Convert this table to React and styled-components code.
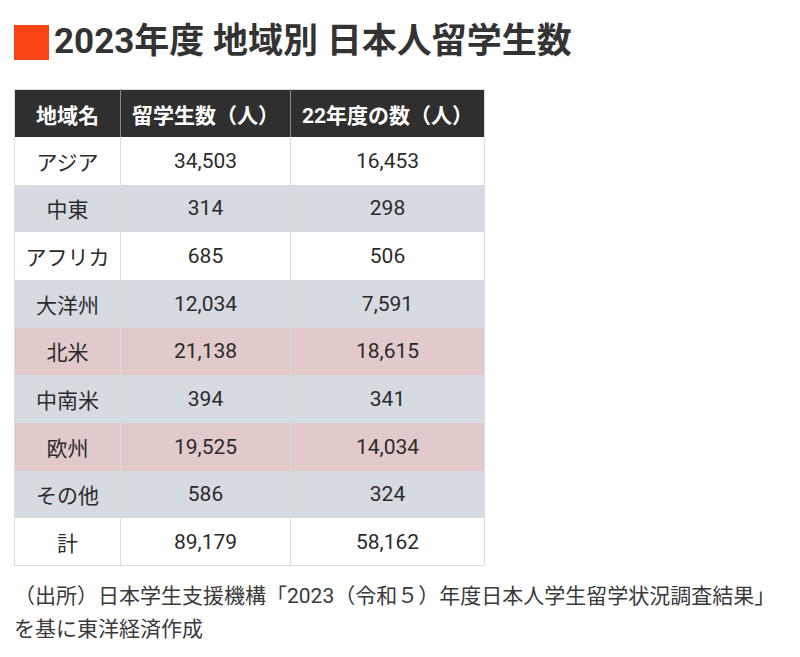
import React from "react";
import styled, { createGlobalStyle } from "styled-components";

const GlobalStyle = createGlobalStyle`
  body {
    margin: 0;
    background: #fff;
    font-family: Roboto, "Noto Sans CJK JP", sans-serif;
    color: #333;
  }
`;

const Page = styled.div`
  padding: 22px 14px 0 14px;
`;

const Title = styled.h1`
  display: flex;
  align-items: center;
  gap: 5px;
  margin: 0;
  height: 40px;
  font-size: 35px;
  font-weight: 700;
  line-height: 40px;
  color: #333;
  white-space: nowrap;
`;

const Mark = styled.span`
  width: 35px;
  height: 35px;
  background: #fb4414;
  flex: none;
`;

const Table = styled.table`
  margin-top: 27px;
  width: 470px;
  table-layout: fixed;
  border-collapse: collapse;
  border: 1px solid #dcdcdc;
`;

const Th = styled.th`
  height: 47px;
  padding: 0;
  background: #2f2f2f;
  color: #fff;
  font-size: 21px;
  font-weight: 700;
  text-align: center;
  border-left: 1px solid #8a8a8a;
  &:first-child {
    border-left: none;
  }
`;

const rowColors = {
  white: "#ffffff",
  gray: "#d6dae1",
  pink: "#e2caca",
};

const Tr = styled.tr`
  height: 47.67px;
  background: ${(p) => rowColors[p.$tone]};
`;

const Td = styled.td`
  padding: 0;
  font-size: 21px;
  font-weight: 400;
  text-align: center;
  color: #2b2b2b;
  border-left: 1px solid #dcdcdc;
`;

const Source = styled.p`
  margin: 14px 0 0 0;
  font-size: 21px;
  line-height: 33px;
  color: #3a3a3a;
`;

const rows = [
  ["アジア", "34,503", "16,453", "white"],
  ["中東", "314", "298", "gray"],
  ["アフリカ", "685", "506", "white"],
  ["大洋州", "12,034", "7,591", "gray"],
  ["北米", "21,138", "18,615", "pink"],
  ["中南米", "394", "341", "gray"],
  ["欧州", "19,525", "14,034", "pink"],
  ["その他", "586", "324", "gray"],
  ["計", "89,179", "58,162", "white"],
];

export default function App() {
  return (
    <>
      <GlobalStyle />
      <Page>
        <Title>
          <Mark />
          2023年度 地域別 日本人留学生数
        </Title>
        <Table>
          <colgroup>
            <col style={{ width: 106 }} />
            <col style={{ width: 170 }} />
            <col style={{ width: 194 }} />
          </colgroup>
          <thead>
            <tr>
              <Th>地域名</Th>
              <Th>留学生数（人）</Th>
              <Th>22年度の数（人）</Th>
            </tr>
          </thead>
          <tbody>
            {rows.map(([name, a, b, tone]) => (
              <Tr key={name} $tone={tone}>
                <Td>{name}</Td>
                <Td>{a}</Td>
                <Td>{b}</Td>
              </Tr>
            ))}
          </tbody>
        </Table>
        <Source>
          （出所）日本学生支援機構「2023（令和５）年度日本人学生留学状況調査結果」
          <br />
          を基に東洋経済作成
        </Source>
      </Page>
    </>
  );
}
